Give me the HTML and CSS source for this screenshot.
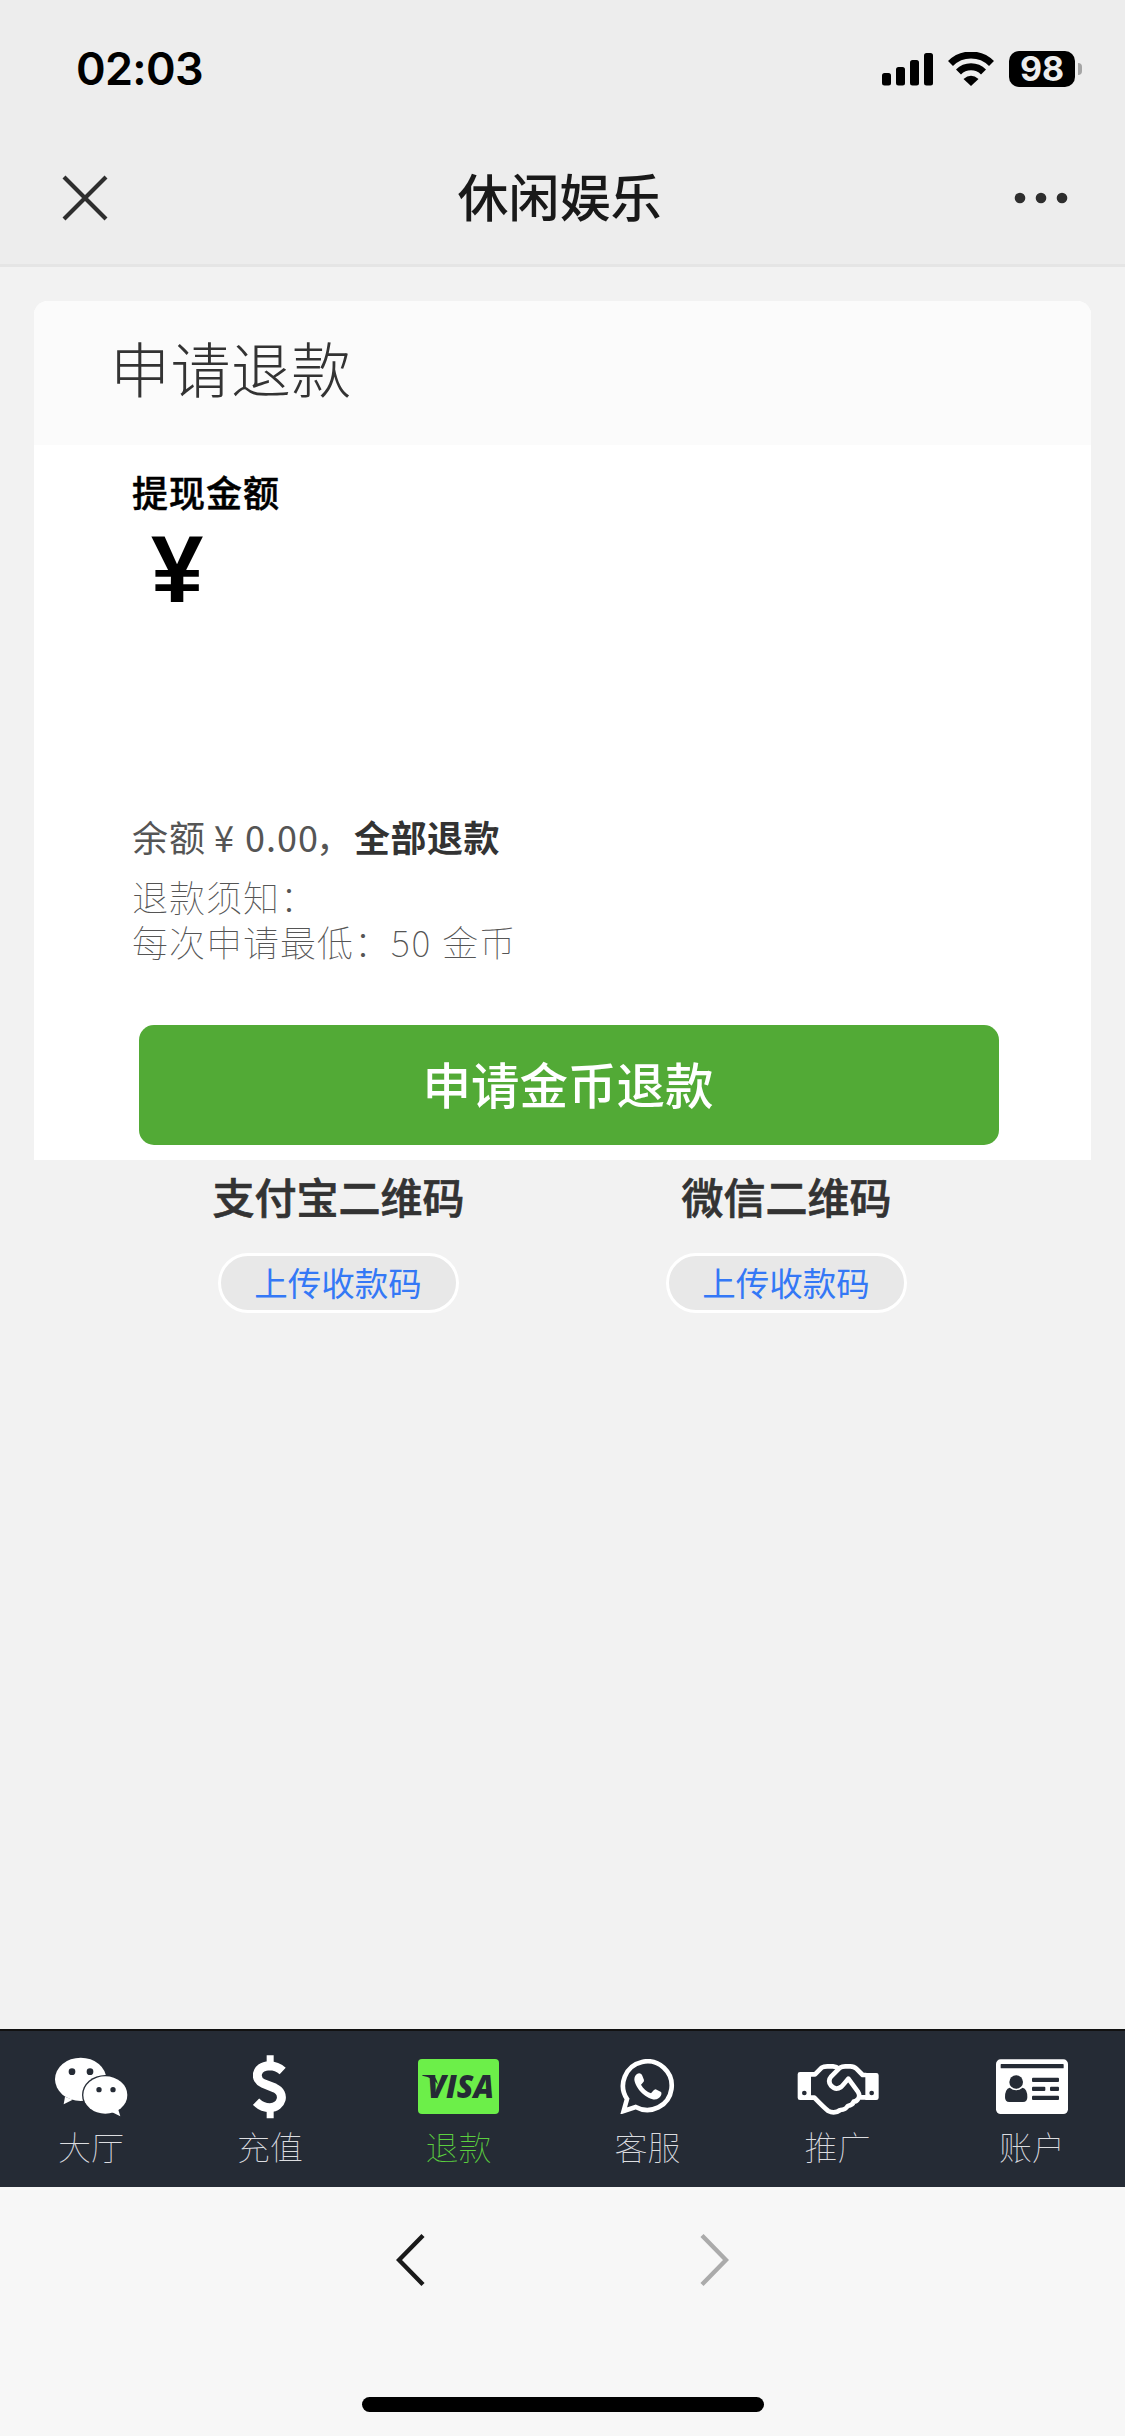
FILE: index.html
```
<!DOCTYPE html>
<html lang="zh-CN">
<head>
<meta charset="utf-8">
<title>休闲娱乐</title>
<link rel="stylesheet" href="styles.css">
</head>
<body>
<header class="top">
  <div class="status">
    <span class="time">02:03</span>
    <div class="indicators">
      <svg class="signal" width="52" height="33" viewBox="0 0 52 33">
        <rect x="0" y="20" width="9" height="12.5" rx="2.5"/><rect x="14" y="14" width="9" height="18.500" rx="2.500"/><rect x="28" y="7" width="9" height="25.500" rx="2.500"/><rect x="42" y="0" width="9" height="32.500" rx="2.500"/>
      </svg>
      <svg class="wifi" width="46" height="34" viewBox="0 0 46 34">
        <path d="M2.500 11.500A29 29 0 0 1 43.500 11.500M10.500 20A17.500 17.500 0 0 1 35.500 20" fill="none" stroke="#000" stroke-width="7"/>
        <path d="M15.500 27Q23 20.500 30.500 27L23 34Z"/>
      </svg>
      <span class="battery">98</span><span class="nub"></span>
    </div>
  </div>
  <nav class="nav">
    <svg width="46" height="46" viewBox="0 0 46 46"><path d="M2 2L44 44M44 2L2 44" stroke="#2e2e2e" stroke-width="4.200"/></svg>
    <h1 class="nav-title">休闲娱乐</h1>
    <svg width="54" height="12" viewBox="0 0 54 12" fill="#2e2e2e"><circle cx="6" cy="6" r="5.300"/><circle cx="27" cy="6" r="5.300"/><circle cx="48" cy="6" r="5.300"/></svg>
  </nav>
</header>

<main class="page">
  <section class="card">
    <h2 class="card-title">申请退款</h2>
    <div class="card-body">
      <div class="label">提现金额</div>
      <div class="currency">¥</div>
      <p class="balance"><span>余额</span><span class="amount">¥</span><span class="num">0.00</span><span class="comma">，</span><b>全部退款</b></p>
      <p class="note">退款须知：<br>每次申请最低：<span class="fifty">50</span>金币</p>
      <button class="submit">申请金币退款</button>
    </div>
  </section>
  <section class="codes">
    <div class="code"><h3>支付宝二维码</h3><button class="upload">上传收款码</button></div>
    <div class="code"><h3>微信二维码</h3><button class="upload">上传收款码</button></div>
  </section>
</main>

<nav class="tabs">
  <a class="tab">
    <span class="icon"><svg width="73" height="60" viewBox="164 139 219 180">
      <path fill="#fff" d="M194 258L190 281L217 267Z"/><ellipse cx="241" cy="206" rx="77" ry="65" fill="#fff"/>
      <ellipse cx="315" cy="253" rx="70" ry="60" fill="#252b35"/><ellipse cx="315" cy="253" rx="66" ry="56" fill="#fff"/><path fill="#fff" d="M334 304L360 317L353 294Z"/>
      <g fill="#252b35"><circle cx="215" cy="183" r="10"/><circle cx="269" cy="183" r="10"/><circle cx="296" cy="237" r="8"/><circle cx="338" cy="237" r="8"/></g>
    </svg></span><span>大厅</span>
  </a>
  <a class="tab">
    <span class="icon"><svg width="34" height="64" viewBox="757 134 102 192">
      <path fill="none" stroke="#fff" stroke-width="27" d="M846 182C833 170 819 166 806 166C763 168 761 209 787 219L822 233C856 249 844 291 808 292Q784 292 766 274"/>
      <path fill="#fff" d="M798 135h21v26h-21zM798 296h21v28h-21z"/>
    </svg></span><span>充值</span>
  </a>
  <a class="tab active">
    <span class="icon"><svg width="81" height="55" viewBox="144 147 243 165">
      <rect x="144" y="147" width="243" height="165" rx="12" fill="#6cef49"/>
      <path fill="#252b35" d="M157 195H184Q198 197 204 224Q190 203 157 197Z"/>
      <text x="172" y="264" class="visa" textLength="200" lengthAdjust="spacingAndGlyphs">VISA</text>
    </svg></span><span>退款</span>
  </a>
  <a class="tab">
    <span class="icon"><svg width="55" height="55" viewBox="752 146 165 165">
      <path fill="none" stroke="#fff" stroke-width="14" stroke-miterlimit="8" d="M773 266A73 73 0 1 1 799 290L763 302Z"/>
      <path fill="#fff" d="M803 191C810 186 817 190 819 196L824 209C825 215 818 219 815 223C821 235 833 245 845 249C850 245 853 237 859 237L875 245C879 251 874 262 862 267C838 272 799 238 795 208C795 200 798 194 803 191Z"/>
    </svg></span><span>客服</span>
  </a>
  <a class="tab">
    <span class="icon"><svg width="82" height="55" viewBox="154 147 246 165" overflow="visible">
      <path fill="#fff" d="M163 186H196V270H163Q156 270 156 263V193Q156 186 163 186ZM359 189H392Q399 189 399 196V263Q399 270 392 270H359Z"/>
      <g fill="none" stroke="#fff" stroke-width="14" stroke-linejoin="round">
        <path d="M194 193H208L228 173Q234 169 245 169H262Q273 170 279 176M283 173Q289 169 299 169H314Q325 169 332 176L351 195H362"/>
        <path d="M283 173L257 199Q245 213 256 227Q270 242 286 231Q292 226 308 206L336 244Q345 258 337 267Q333 274 324 275Q321 286 306 288Q300 299 284 300Q266 313 248 303Q238 296 206 263H194M340 262H362"/>
      </g>
      <g fill="#252b35"><circle cx="176" cy="249" r="7"/><circle cx="378" cy="249" r="7"/></g>
    </svg></span><span>推广</span>
  </a>
  <a class="tab">
    <span class="icon"><svg width="72" height="55" viewBox="756 147 216 165">
      <rect x="756" y="148" width="216" height="164" rx="14" fill="#fff"/>
      <g fill="#252b35"><rect x="770" y="162" width="189" height="13" rx="2"/>
      <path d="M797 233Q783 236 783 262Q783 276 796 276H837Q850 276 850 262Q850 236 836 233Q816 248 797 233Z"/><circle cx="816.500" cy="216" r="20.500"/>
      <rect x="864" y="203" width="81" height="13" rx="3"/><rect x="864" y="230" width="40" height="13" rx="3"/><rect x="918" y="230" width="27" height="13" rx="3"/><rect x="864" y="257" width="81" height="13" rx="3"/></g>
    </svg></span><span>账户</span>
  </a>
</nav>

<footer class="browser">
  <div class="arrows">
    <svg width="30" height="54" viewBox="0 0 30 54"><path d="M27 2.500L3 27L27 51.500" fill="none" stroke="#1a1a1a" stroke-width="4.400"/></svg>
    <svg width="30" height="54" viewBox="0 0 30 54"><path d="M3 2.500L27 27L3 51.500" fill="none" stroke="#ababab" stroke-width="4.400"/></svg>
  </div>
  <div class="home"></div>
</footer>
</body>
</html>
```
FILE: styles.css
```
* { box-sizing: border-box; margin: 0; padding: 0; }
body {
  display: flex;
  flex-direction: column;
  width: 1125px;
  height: 2436px;
  overflow: hidden;
  background: #f2f2f2;
  font-family: "Noto Sans CJK SC", sans-serif;
  color: #333;
}
svg { display: block; }
button { border: 0; font-family: inherit; }

.top { height: 267px; background: #ededed; border-bottom: 3px solid #e5e5e5; }
.status { display: flex; justify-content: space-between; height: 132px; padding: 0 43px 0 76px; }
.time { padding-top: 41px; font: 600 45px/56px Inter, sans-serif; letter-spacing: -0.7px; color: #000; }
.indicators { display: flex; align-items: flex-start; padding-top: 51px; }
.signal { margin: 2px 14px 0 0; }
.wifi { margin: 1px 15px 0 0; }
.battery {
  width: 66px;
  height: 36px;
  border-radius: 10px;
  background: #000;
  color: #ededed;
  font: 700 34px/36px Inter, sans-serif;
  text-align: center;
}
.nub { width: 4px; height: 12px; margin: 12px 0 0 3px; border-radius: 0 4px 4px 0; background: #a5a5a5; }
.nav { display: flex; align-items: center; justify-content: space-between; height: 132px; padding: 0 57px 0 62px; }
.nav-title { padding: 0 3px 6px 0; font-size: 51px; font-weight: 500; line-height: 60px; color: #191919; }

.page { flex: 1; padding: 34px 34px 0; }
.card { height: 859px; border-radius: 14px 14px 0 0; background: #fff; overflow: hidden; }
.card-title {
  height: 144px;
  padding: 26px 0 0 76px;
  background: #fbfbfb;
  font-size: 60px;
  font-weight: 300;
  line-height: 80px;
  letter-spacing: 0.4px;
}
.card-body { padding: 25px 92px 0 98px; }
.label { font-size: 36px; font-weight: 500; line-height: 42px; letter-spacing: 1px; color: #000; -webkit-text-stroke: 0.5px; }
.currency { height: 299px; padding-left: 19px; font: 700 94px/115px "Liberation Sans", sans-serif; color: #000; }
.balance { display: flex; height: 63px; font-size: 36px; line-height: 50px; letter-spacing: 1px; color: #555; }
.balance b { color: #333; letter-spacing: 0.5px; }
.amount { margin-left: 8px; width: 31px; }
.num { width: 71px; }
.comma { width: 38px; }
.note { height: 151px; font-size: 36px; font-weight: 100; line-height: 45px; letter-spacing: 1px; color: #555; }
.fifty { margin-right: 10px; letter-spacing: 1.8px; }
.submit {
  display: block;
  width: 860px;
  height: 120px;
  margin-left: 7px;
  padding: 0 2px 4px 0;
  border-radius: 15px;
  background: #52aa36;
  color: #fff;
  font-size: 48.500px;
  font-weight: 500;
}

.codes { display: grid; grid-template-columns: 448px 448px; justify-content: center; }
.code { display: flex; flex-direction: column; align-items: center; }
.code h3 { height: 93px; padding-top: 11px; font-size: 42px; font-weight: 500; line-height: 50px; -webkit-text-stroke: 0.7px; }
.upload {
  width: 241px;
  height: 60px;
  padding: 0 1px 4px 0;
  border: 3px solid #fff;
  border-radius: 30px;
  background: #e8e8e8;
  color: #3478f6;
  font-size: 33.500px;
}

.tabs {
  display: grid;
  grid-template-columns: 182px 176px 201px 177px 203px 186px;
  height: 158px;
  padding-top: 24px;
  border-top: 2px solid #111;
  background: #252b35;
}
.tab { display: flex; flex-direction: column; align-items: center; gap: 6px; font-size: 33px; font-weight: 100; line-height: 44px; color: #dcdde0; }
.icon { display: flex; align-items: center; height: 63px; }
.active { color: #5bd03f; }
.visa { font: italic 800 97px "Open Sans", sans-serif; fill: #252b35; }

.browser { height: 249px; padding-top: 46px; background: #f7f7f7; }
.arrows { display: flex; justify-content: space-between; width: 333px; margin: 0 auto; }
.home { width: 402px; height: 15px; margin: 110px auto 0; border-radius: 8px; background: #000; }
```
